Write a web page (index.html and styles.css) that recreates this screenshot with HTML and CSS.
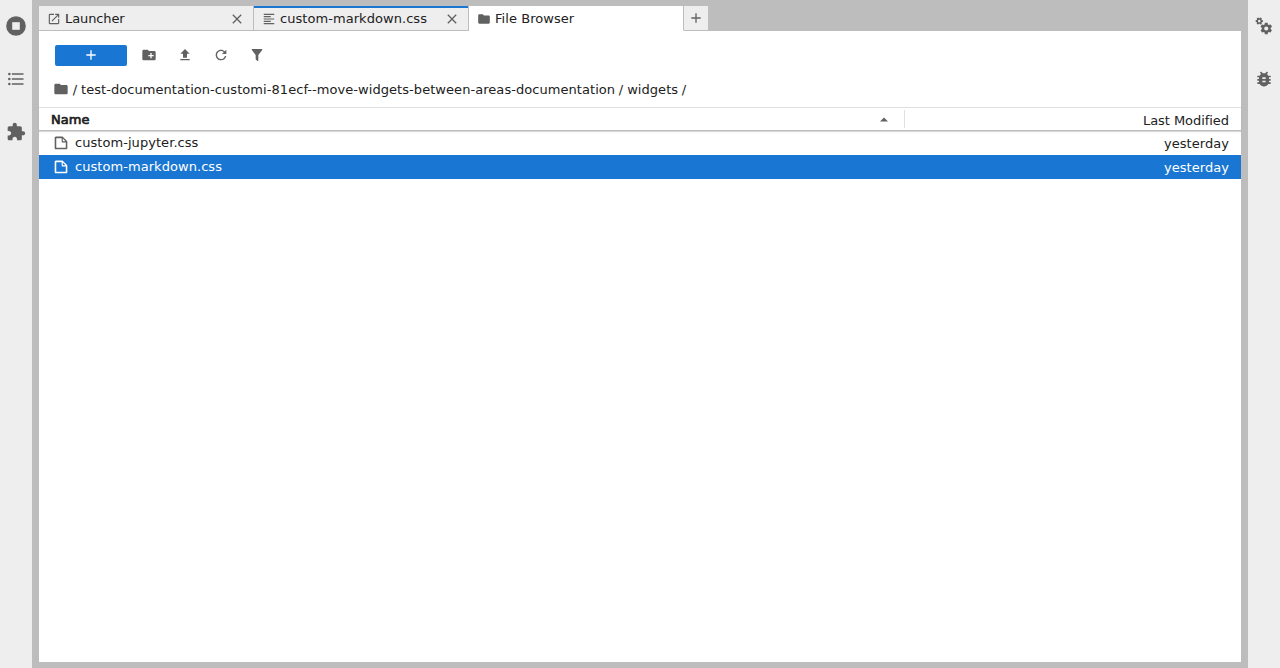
FILE: index.html
```html
<!DOCTYPE html>
<html lang="en">
<head>
<meta charset="utf-8">
<title>File Browser</title>
<link rel="stylesheet" href="styles.css">
</head>
<body>
<div class="app">
  <nav class="sidebar">
    <div class="side-item"><svg width="20" height="20" viewBox="0 0 20 20"><circle cx="10" cy="10" r="9.8"/><rect class="cut" x="6.2" y="6.2" width="7.6" height="7.6"/></svg></div>
    <div class="side-item"><svg width="20" height="20" viewBox="0 0 24 24"><path d="M7 5h14v2H7zM7 11h14v2H7zM7 17h14v2H7zM4 4.500a1.500 1.500 0 1 0 0 3 1.500 1.500 0 0 0 0-3zM4 10.500a1.500 1.500 0 1 0 0 3 1.500 1.500 0 0 0 0-3zM4 16.500a1.500 1.500 0 1 0 0 3 1.500 1.500 0 0 0 0-3z"/></svg></div>
    <div class="side-item"><svg width="20" height="20" viewBox="0 0 24 24"><path d="M20.500 11H19V7c0-1.100-.9-2-2-2h-4V3.500C13 2.120 11.880 1 10.500 1S8 2.120 8 3.500V5H4c-1.100 0-1.990.9-1.990 2v3.800H3.500c1.490 0 2.700 1.210 2.700 2.700s-1.210 2.700-2.700 2.700H2V20c0 1.100.9 2 2 2h3.800v-1.500c0-1.490 1.210-2.700 2.700-2.700 1.490 0 2.700 1.210 2.700 2.700V22H17c1.100 0 2-.9 2-2v-4h1.500c1.380 0 2.500-1.120 2.500-2.500S21.880 11 20.500 11z"/></svg></div>
  </nav>

  <main class="dock">
    <div class="tabs">
      <div class="tab">
        <svg class="tab-icon" width="14" height="14" viewBox="0 0 24 24"><path d="M19 19H5V5h7V3H5a2 2 0 0 0-2 2v14a2 2 0 0 0 2 2h14c1.100 0 2-.9 2-2v-7h-2v7zM14 3v2h3.590l-9.830 9.830 1.410 1.410L19 6.410V10h2V3h-7z"/></svg>
        <span class="tab-label tight">Launcher</span>
        <svg class="tab-close" width="16" height="16" viewBox="0 0 24 24"><path d="M19 6.410L17.590 5 12 10.590 6.410 5 5 6.410 10.590 12 5 17.590 6.410 19 12 13.410 17.590 19 19 17.590 13.410 12z"/></svg>
      </div>
      <div class="tab tab-active">
        <svg class="tab-icon" width="14" height="14" viewBox="0 0 24 24"><path d="M15 15H3v2h12v-2zm0-8H3v2h12V7zM3 13h18v-2H3v2zm0 8h18v-2H3v2zM3 3v2h18V3H3z"/></svg>
        <span class="tab-label">custom-markdown.css</span>
        <svg class="tab-close" width="16" height="16" viewBox="0 0 24 24"><path d="M19 6.410L17.590 5 12 10.590 6.410 5 5 6.410 10.590 12 5 17.590 6.410 19 12 13.410 17.590 19 19 17.590 13.410 12z"/></svg>
      </div>
      <div class="tab tab-current">
        <svg class="tab-icon" width="14" height="14" viewBox="0 0 24 24"><path d="M10 4H4c-1.100 0-1.990.9-1.990 2L2 18c0 1.100.9 2 2 2h16c1.100 0 2-.9 2-2V8c0-1.100-.9-2-2-2h-8l-2-2z"/></svg>
        <span class="tab-label">File Browser</span>
      </div>
      <div class="tab-add"><svg width="16" height="16" viewBox="0 0 24 24"><path d="M19 13h-6v6h-2v-6H5v-2h6V5h2v6h6v2z"/></svg></div>
    </div>

    <section class="browser">
      <div class="toolbar">
        <div class="new-button"><svg width="16" height="16" viewBox="0 0 24 24"><path d="M19 13h-6v6h-2v-6H5v-2h6V5h2v6h6v2z"/></svg></div>
        <div class="tool"><svg width="16" height="16" viewBox="0 0 24 24"><path d="M20 6h-8l-2-2H4c-1.110 0-1.990.89-1.990 2L2 18c0 1.110.89 2 2 2h16c1.110 0 2-.89 2-2V8c0-1.110-.89-2-2-2zm-1 8h-3v3h-2v-3h-3v-2h3V9h2v3h3v2z"/></svg></div>
        <div class="tool"><svg width="16" height="16" viewBox="0 0 24 24"><path d="M9 16h6v-6h4l-7-7-7 7h4zm-4 2h14v2H5z"/></svg></div>
        <div class="tool"><svg width="16" height="16" viewBox="0 0 18 18"><path d="M9 13.500c-2.490 0-4.500-2.010-4.500-4.500S6.510 4.500 9 4.500c1.240 0 2.360.52 3.170 1.330L10 8h5V3l-1.760 1.760C12.150 3.680 10.660 3 9 3 5.690 3 3.010 5.690 3.010 9S5.690 15 9 15c2.970 0 5.430-2.160 5.900-5h-1.520c-.46 2-2.240 3.500-4.380 3.500z"/></svg></div>
        <div class="tool"><svg width="16" height="16" viewBox="0 0 24 24"><path d="M14 12v7.880c.04.3-.06.62-.29.83a.996.996 0 0 1-1.410 0l-2.010-2.010a.989.989 0 0 1-.29-.83V12h-.03L4.210 4.620a1 1 0 0 1 .17-1.400c.19-.14.400-.22.620-.22h14c.22 0 .43.080.62.220a1 1 0 0 1 .17 1.400L14.030 12H14z"/></svg></div>
      </div>

      <div class="crumbs">
        <svg width="16" height="16" viewBox="0 0 24 24"><path d="M10 4H4c-1.100 0-1.990.9-1.990 2L2 18c0 1.100.9 2 2 2h16c1.100 0 2-.9 2-2V8c0-1.100-.9-2-2-2h-8l-2-2z"/></svg>
        <div class="crumb-path"><span class="slash">/</span><span class="crumb">test-documentation-customi-81ecf--move-widgets-between-areas-documentation</span><span class="slash">/</span><span class="crumb">widgets</span><span class="slash">/</span></div>
      </div>

      <div class="list-header">
        <div class="col-name"><span class="heading">Name</span><svg width="8" height="5" viewBox="0 0 8 5"><path d="M0 4.500L4 .5l4 4z"/></svg></div>
        <div class="col-modified">Last Modified</div>
      </div>

      <div class="list">
        <div class="row">
          <svg width="16" height="16" viewBox="0 0 22 22"><path d="M19.300 8.200l-5.500-5.500c-.3-.3-.7-.5-1.200-.5H3.900c-.8.1-1.600.9-1.600 1.800v14.100c0 .9.700 1.600 1.600 1.600h14.200c.9 0 1.600-.7 1.600-1.600V9.400c.1-.5-.1-.9-.4-1.200zm-5.800-3.300l3.400 3.600h-3.400V4.900zm3.900 12.700H4.700c-.1 0-.2 0-.2-.2V4.700c0-.2.1-.3.2-.3h7.200v4.400s0 .8.300 1.100c.3.300 1.100.3 1.100.3h4.300v7.200s-.1.200-.2.200z"/></svg>
          <span class="file">custom-jupyter.css</span><span class="modified">yesterday</span>
        </div>
        <div class="row row-selected">
          <svg width="16" height="16" viewBox="0 0 22 22"><path d="M19.300 8.200l-5.500-5.500c-.3-.3-.7-.5-1.200-.5H3.900c-.8.1-1.600.9-1.600 1.800v14.100c0 .9.700 1.600 1.600 1.600h14.200c.9 0 1.600-.7 1.600-1.600V9.400c.1-.5-.1-.9-.4-1.200zm-5.800-3.300l3.400 3.600h-3.400V4.900zm3.900 12.700H4.700c-.1 0-.2 0-.2-.2V4.700c0-.2.1-.3.2-.3h7.200v4.400s0 .8.300 1.100c.3.300 1.100.3 1.100.3h4.300v7.200s-.1.200-.2.200z"/></svg>
          <span class="file">custom-markdown.css</span><span class="modified">yesterday</span>
        </div>
      </div>
    </section>
  </main>

  <nav class="sidebar">
    <div class="side-item"><svg width="20" height="20" viewBox="0 0 20 20">
      <defs><path id="gear" d="M19.430 12.980c.04-.32.07-.64.07-.98s-.03-.66-.07-.98l2.110-1.650c.19-.15.24-.42.12-.64l-2-3.460c-.12-.22-.39-.3-.61-.22l-2.490 1c-.52-.4-1.080-.73-1.690-.98l-.38-2.650C14.460 2.180 14.250 2 14 2h-4c-.25 0-.46.18-.49.42l-.38 2.650c-.61.25-1.170.59-1.690.98l-2.490-1c-.23-.09-.49 0-.61.22l-2 3.460c-.13.22-.07.49.12.64l2.110 1.650c-.04.32-.07.65-.07.98s.03.66.07.98l-2.110 1.650c-.19.15-.24.42-.12.64l2 3.460c.12.22.39.3.61.22l2.490-1c.52.4 1.080.73 1.690.98l.38 2.650c.03.24.24.42.49.42h4c.25 0 .46-.18.49-.42l.38-2.650c.61-.25 1.170-.59 1.690-.98l2.490 1c.23.09.49 0 .61-.22l2-3.460c.12-.22.07-.49-.12-.64l-2.110-1.650zM12 15.500c-1.930 0-3.500-1.570-3.500-3.500s1.570-3.500 3.500-3.500 3.500 1.570 3.500 3.500-1.570 3.500-3.500 3.500z"/></defs>
      <use href="#gear" transform="translate(5.300 5.500) scale(.58)"/>
      <use href="#gear" transform="translate(.9 .7) scale(.365) rotate(30 12 12)"/>
    </svg></div>
    <div class="side-item"><svg width="20" height="20" viewBox="0 0 24 24"><path d="M20 8h-2.810c-.45-.78-1.070-1.450-1.820-1.960L17 4.410 15.590 3l-2.170 2.170C12.960 5.060 12.490 5 12 5c-.49 0-.96.06-1.410.17L8.410 3 7 4.410l1.620 1.630C7.880 6.550 7.260 7.220 6.810 8H4v2h2.090c-.05.33-.09.66-.09 1v1H4v2h2v1c0 .34.04.67.09 1H4v2h2.810c1.040 1.790 2.970 3 5.190 3s4.150-1.210 5.190-3H20v-2h-2.090c.05-.33.09-.66.09-1v-1h2v-2h-2v-1c0-.34-.04-.67-.09-1H20V8zm-6 8h-4v-2h4v2zm0-4h-4v-2h4v2z"/></svg></div>
  </nav>
</div>
</body>
</html>
```

FILE: styles.css
```css
* { box-sizing: border-box; }
body {
  margin: 0;
  font: 13px/17px "DejaVu Sans", sans-serif;
  letter-spacing: .055px;
  color: #212121;
}
svg { display: block; flex: none; fill: #616161; }

.app { display: flex; height: 668px; background: #bdbdbd; overflow: hidden; }

.sidebar { width: 32px; background: #eee; flex: none; }
.side-item { height: 53px; padding-bottom: 1px; display: flex; align-items: flex-end; justify-content: center; padding-bottom: 17px; }
.cut { fill: #eee; }

.dock { flex: 1; min-width: 0; display: flex; flex-direction: column; padding: 6px 7px; }

.tabs { display: flex; height: 25px; flex: none; }
.tab {
  display: flex;
  align-items: center;
  width: 215px;
  padding: 1px 8px 0;
  background: #eee;
  border-right: 1px solid #bdbdbd;
  border-bottom: 1px solid #bdbdbd;
}
.tab-active { box-shadow: inset 0 2px #1976d2; }
.tab-current { background: #fff; border-bottom-color: #fff; }
.tab-label { flex: 1; margin-left: 4px; white-space: nowrap; }
.tight { letter-spacing: -.1px; }
.tab-add {
  display: flex;
  align-items: center;
  justify-content: center;
  width: 24px;
  background: #eee;
  border-bottom: 1px solid #bdbdbd;
}

.browser { flex: 1; background: #fff; }
.toolbar { display: flex; align-items: flex-start; padding: 14px 16px 0; height: 35px; }
.new-button {
  display: flex;
  justify-content: center;
  width: 72px;
  height: 21px;
  padding-top: 2px;
  margin-right: 4px;
  background: #1976d2;
  border-radius: 2px;
}
.new-button svg { fill: #fff; }
.tool { width: 36px; padding-top: 2px; display: flex; justify-content: center; }

.crumbs { display: flex; align-items: center; height: 41px; padding: 4px 14px 0; white-space: pre; }
.crumb-path { padding-top: 2px; }
.crumbs .slash { margin: 0 3.900px 0 3.700px; }

.list-header {
  display: flex;
  align-items: center;
  height: 24px;
  border-top: 1px solid #e0e0e0;
  border-bottom: 1px solid #bdbdbd;
  box-shadow: 0 1px 1px rgba(0, 0, 0, .15);
}
.col-name {
  display: flex;
  align-items: center;
  justify-content: space-between;
  width: 866px;
  height: 18px;
  padding: 0 16px 0 12px;
  border-right: 1px solid #e0e0e0;
}
.heading { -webkit-text-stroke: .7px #212121; }
.col-modified { flex: 1; padding: 2px 12px 0 0; text-align: right; letter-spacing: -.05px; }

.row { display: flex; align-items: center; height: 24px; padding: 0 12px 0 14px; }
.row .file { flex: 1; margin-left: 6px; padding-bottom: 1px; }
.row .modified { padding-top: 1px; }
.row-selected { background: #1976d2; color: #fff; }
.row-selected svg { fill: #fff; }
```
